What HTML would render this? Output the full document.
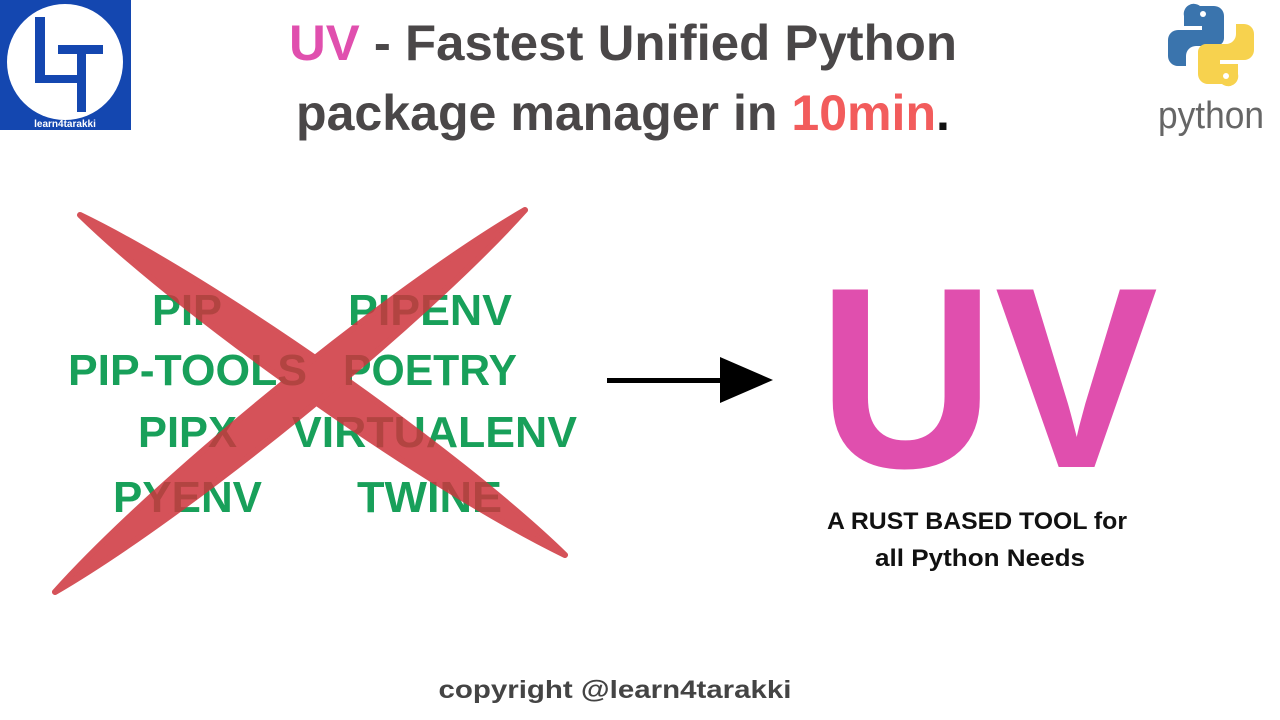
<!DOCTYPE html>
<html><head><meta charset="utf-8"><style>
html,body{margin:0;padding:0;background:#fff;}
svg{display:block;}
</style></head><body>
<svg width="1280" height="720" viewBox="0 0 1280 720" xmlns="http://www.w3.org/2000/svg" font-family="Liberation Sans, sans-serif">
<rect width="1280" height="720" fill="#fff"/>
<!-- LT logo -->
<rect x="0" y="0" width="131" height="130" fill="#1447b0"/>
<circle cx="65" cy="62" r="58" fill="#fff"/>
<rect x="35" y="17" width="10" height="66" fill="#1447b0"/>
<rect x="35" y="75" width="45" height="8" fill="#1447b0"/>
<rect x="58" y="45" width="45" height="9" fill="#1447b0"/>
<rect x="77" y="45" width="9" height="67" fill="#1447b0"/>
<text x="65" y="127" font-size="10" font-weight="bold" fill="#fff" text-anchor="middle">learn4tarakki</text>
<!-- python logo -->
<path d="M1200 6 h14 a10 10 0 0 1 10 10 v22 a8 8 0 0 1 -8 8 h-20 a10 10 0 0 0 -10 10 v10 h-8 a10 10 0 0 1 -10 -10 v-16 a10 10 0 0 1 10 -10 h24 v-4 h-18 v-10 a10 10 0 0 1 16 -10z" fill="#3a74ad"/>
<circle cx="1203" cy="14" r="3" fill="#fff"/>
<path d="M1222 84 h-14 a10 10 0 0 1 -10 -10 v-22 a8 8 0 0 1 8 -8 h20 a10 10 0 0 0 10 -10 v-10 h8 a10 10 0 0 1 10 10 v16 a10 10 0 0 1 -10 10 h-24 v4 h18 v10 a10 10 0 0 1 -16 10z" fill="#f7d24e"/>
<circle cx="1226" cy="76" r="3" fill="#fff"/>
<text x="1211" y="128" font-size="38" fill="#666" text-anchor="middle" textLength="106" lengthAdjust="spacingAndGlyphs">python</text>
<!-- title -->
<text x="289" y="60" font-size="50" font-weight="bold" fill="#4a4748" textLength="668" lengthAdjust="spacingAndGlyphs"><tspan fill="#e04fae">UV</tspan> - Fastest Unified Python</text>
<text x="296" y="130" font-size="50" font-weight="bold" fill="#4a4748" textLength="654" lengthAdjust="spacingAndGlyphs">package manager in <tspan fill="#f25c5c">10min</tspan><tspan fill="#111">.</tspan></text>
<!-- tools -->
<g font-size="44" font-weight="bold" fill="#18a05a">
<text x="152" y="325" textLength="70" lengthAdjust="spacingAndGlyphs">PIP</text>
<text x="348" y="325" textLength="164" lengthAdjust="spacingAndGlyphs">PIPENV</text>
<text x="68" y="385" textLength="239" lengthAdjust="spacingAndGlyphs">PIP-TOOLS</text>
<text x="343" y="385" textLength="174" lengthAdjust="spacingAndGlyphs">POETRY</text>
<text x="138" y="447" textLength="99" lengthAdjust="spacingAndGlyphs">PIPX</text>
<text x="292" y="447" textLength="285" lengthAdjust="spacingAndGlyphs">VIRTUALENV</text>
<text x="113" y="512" textLength="149" lengthAdjust="spacingAndGlyphs">PYENV</text>
<text x="357" y="512" textLength="145" lengthAdjust="spacingAndGlyphs">TWINE</text>
</g>
<!-- cross -->
<g fill="#ce343d" stroke="#ce343d" stroke-width="6" stroke-linejoin="round" opacity="0.85">
<path d="M80 215 C187.5 319.7 430 489.7 565 555 C457.5 450.3 215 280.3 80 215Z"/>
<path d="M525 210 C422.6 324.1 187.6 515.1 55 592 C157.4 477.9 392.4 286.9 525 210Z"/>
</g>
<!-- arrow -->
<rect x="607" y="378" width="125" height="5" fill="#000"/>
<path d="M720 357 L773 380 L720 403Z" fill="#000"/>
<!-- UV -->
<text x="818" y="467" font-size="258" font-weight="bold" fill="#e04fae" textLength="340" lengthAdjust="spacingAndGlyphs">UV</text>
<text x="977" y="529" font-size="24" font-weight="bold" fill="#111" text-anchor="middle" textLength="300" lengthAdjust="spacingAndGlyphs">A RUST BASED TOOL for</text>
<text x="980" y="566" font-size="24" font-weight="bold" fill="#111" text-anchor="middle" textLength="210" lengthAdjust="spacingAndGlyphs">all Python Needs</text>
<text x="615" y="698" font-size="25" font-weight="bold" fill="#444" text-anchor="middle" textLength="353" lengthAdjust="spacingAndGlyphs">copyright @learn4tarakki</text>
</svg>
</body></html>
